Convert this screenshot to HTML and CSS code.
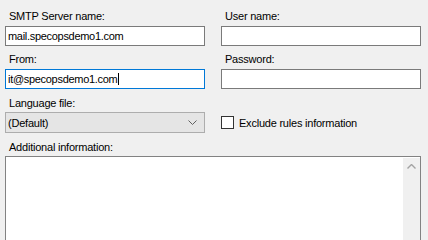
FILE: index.html
```html
<!DOCTYPE html>
<html>
<head>
<meta charset="utf-8">
<link rel="stylesheet" href="styles.css">
</head>
<body>
<div class="form">
  <div class="field">
    <div class="label">SMTP Server name:</div>
    <div class="box">mail.specopsdemo1.com</div>
  </div>
  <div class="field">
    <div class="label">User name:</div>
    <div class="box"></div>
  </div>
  <div class="field gap">
    <div class="label">From:</div>
    <div class="box focus">it@specopsdemo1.com<span class="caret"></span></div>
  </div>
  <div class="field gap">
    <div class="label">Password:</div>
    <div class="box"></div>
  </div>
  <div class="field gap2">
    <div class="label">Language file:</div>
    <div class="combo"><span>(Default)</span>
      <svg class="chev" width="9" height="5" viewBox="0 0 9 5"><path d="M0.5 0.5 L4.5 4.5 L8.5 0.5" fill="none" stroke="#606060" stroke-width="1"/></svg>
    </div>
  </div>
  <div class="check-row">
    <span class="checkbox"></span>
    <span class="check-label">Exclude rules information</span>
  </div>
  <div class="field wide gap2">
    <div class="label">Additional information:</div>
    <div class="textarea">
      <div class="scrollbar">
        <svg class="up" width="9" height="5" viewBox="0 0 9 5"><path d="M0.5 4.5 L4.5 0.5 L8.5 4.5" fill="none" stroke="#a3a3a3" stroke-width="1.4"/></svg>
      </div>
    </div>
  </div>
</div>
</body>
</html>
```
FILE: styles.css
```css
html, body {
  margin: 0;
  padding: 0;
  background: #f0f0f0;
  overflow: hidden;
}
body {
  font-family: "Liberation Sans", Arial, sans-serif;
  font-size: 11px;
  letter-spacing: -0.22px;
  color: #000;
}
.form {
  display: grid;
  grid-template-columns: 200px 200px;
  column-gap: 16px;
  padding: 9px 0 0 5px;
  align-items: end;
}
.field {
  display: flex;
  flex-direction: column;
}
.field.gap { margin-top: 6px; }
.field.gap2 { margin-top: 7px; }
.field.wide { grid-column: 1 / span 2; }
.label {
  line-height: 14px;
  height: 14px;
  padding-left: 4px;
  margin-bottom: 3px;
  white-space: nowrap;
}
.gap2 .label { margin-bottom: 2px; }
.box {
  box-sizing: border-box;
  height: 20px;
  border: 1px solid #7a7a7a;
  background: #fff;
  padding-left: 2px;
  font-size: 11px;
  letter-spacing: -0.3px;
  line-height: 18px;
  white-space: nowrap;
  display: flex;
  align-items: center;
}
.box.focus { border-color: #0078d7; }
.caret {
  display: inline-block;
  width: 1px;
  height: 12px;
  background: #000;
  margin-left: 1px;
}
.combo {
  box-sizing: border-box;
  height: 21px;
  border: 1px solid #adadad;
  background: #e5e5e5;
  padding: 0 4px 0 2px;
  display: flex;
  align-items: center;
  justify-content: space-between;
  font-size: 11px;
}
.chev { margin-right: 3px; }
.check-row {
  height: 21px;
  display: flex;
  align-items: center;
  margin-top: 7px;
}
.checkbox {
  box-sizing: border-box;
  width: 13px;
  height: 13px;
  border: 1px solid #333;
  background: #fff;
}
.check-label {
  margin-left: 5px;
}
.textarea {
  box-sizing: border-box;
  height: 90px;
  border: 1px solid #828282;
  background: #fff;
  display: flex;
  justify-content: flex-end;
  padding: 1px 0 0 0;
}
.scrollbar {
  width: 17px;
  background: #f0f0f0;
  display: flex;
  justify-content: center;
  padding-top: 6px;
  box-sizing: border-box;
}
.up { display: block; }
```
